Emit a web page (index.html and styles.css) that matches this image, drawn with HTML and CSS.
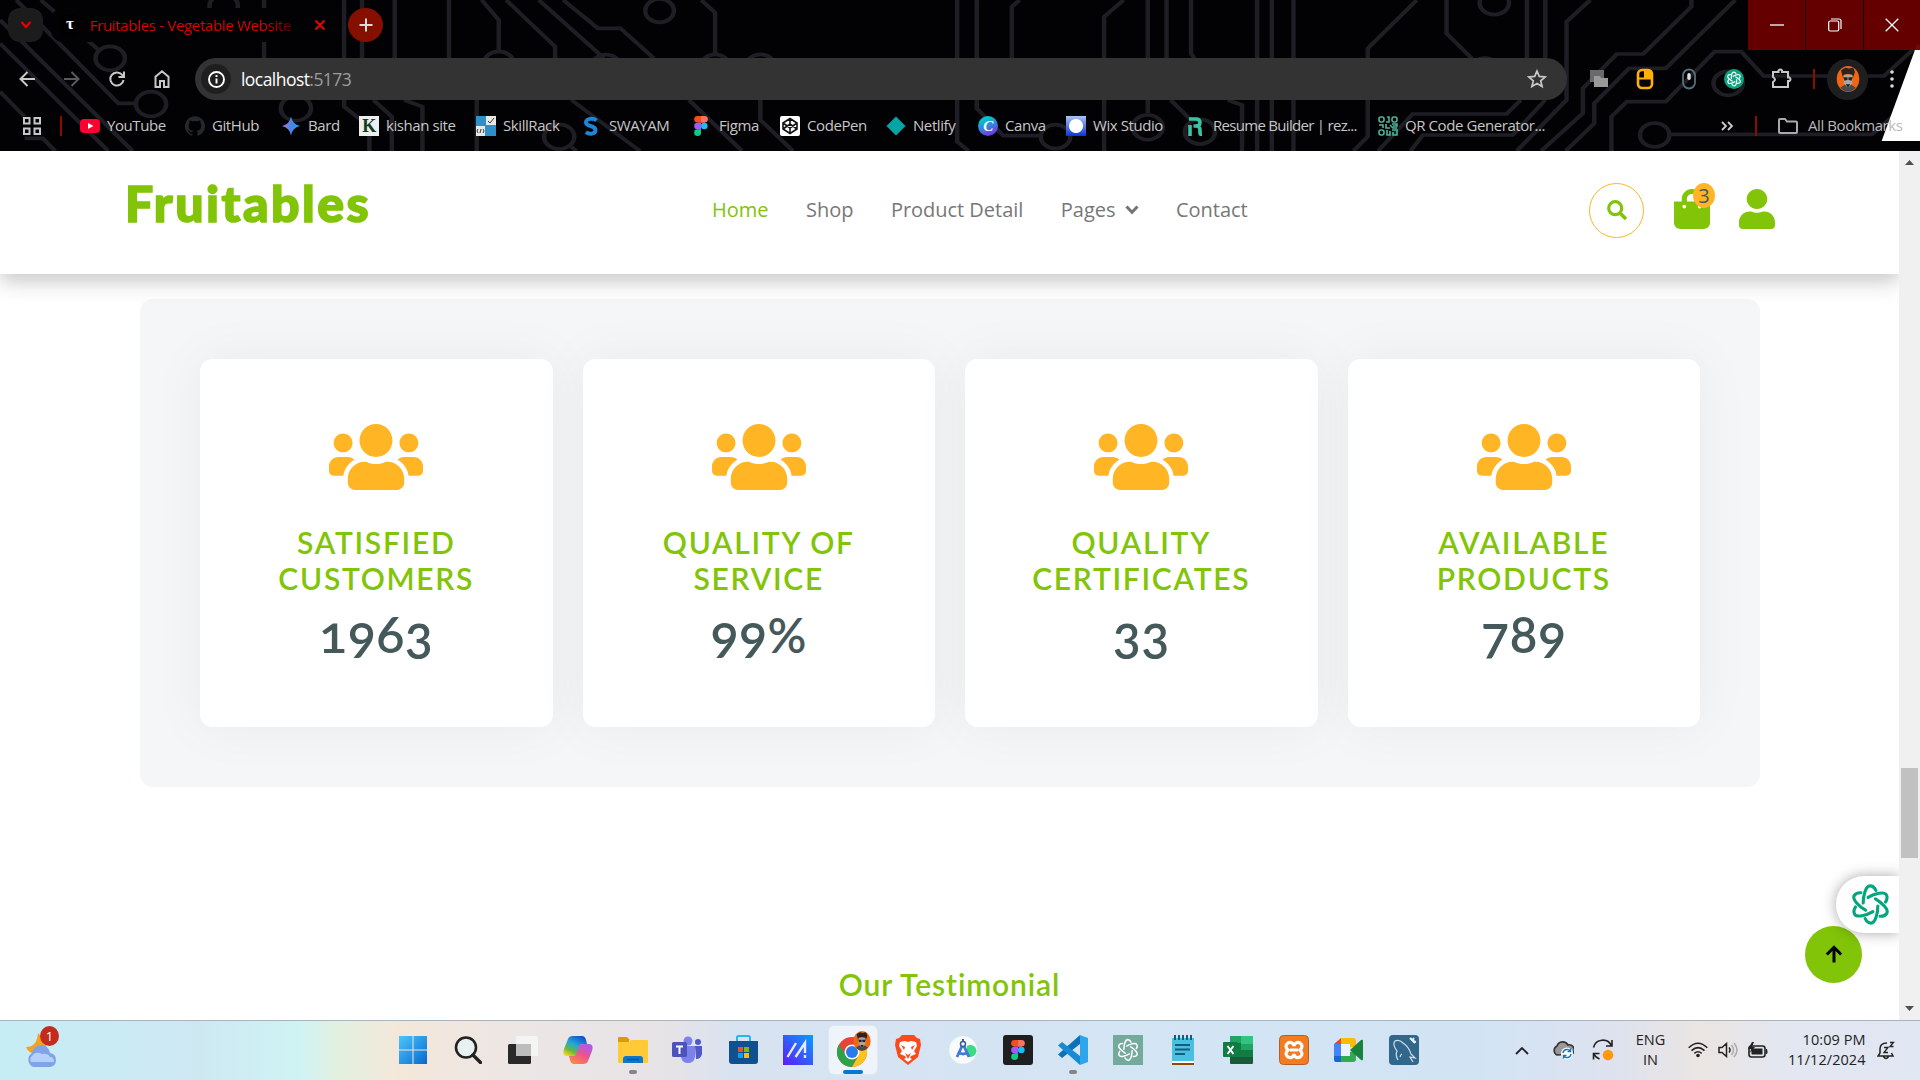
FILE: index.html
```html
<!DOCTYPE html>
<html lang="en">
<head>
<meta charset="utf-8">
<title>Fruitables - Vegetable Website Template</title>
<link rel="stylesheet" href="styles.css">
</head>
<body>
<svg class="defs" width="0" height="0" aria-hidden="true">
  <symbol id="users" viewBox="0 0 640 512"><path d="M96 224c35.300 0 64-28.700 64-64s-28.700-64-64-64-64 28.700-64 64 28.700 64 64 64zm448 0c35.300 0 64-28.700 64-64s-28.700-64-64-64-64 28.700-64 64 28.700 64 64 64zm32 32h-64c-17.600 0-33.500 7.100-45.100 18.600 40.300 22.100 68.900 62 75.100 109.400h66c17.700 0 32-14.300 32-32v-32c0-35.300-28.700-64-64-64zm-256 0c61.900 0 112-50.100 112-112S381.900 32 320 32 208 82.100 208 144s50.100 112 112 112zm76.800 32h-8.300c-20.800 10-43.900 16-68.500 16s-47.600-6-68.500-16h-8.300C179.600 288 128 339.600 128 403.200V432c0 26.500 21.500 48 48 48h288c26.500 0 48-21.500 48-48v-28.800c0-63.600-51.600-115.200-115.200-115.200zm-223.700-13.400C161.500 263.100 145.600 256 128 256H64c-35.300 0-64 28.700-64 64v32c0 17.700 14.300 32 32 32h65.900c6.300-47.400 34.900-87.300 75.200-109.400z"/></symbol>
  <symbol id="knot" viewBox="-22 -22 44 44"><g fill="none" stroke="currentColor" stroke-linecap="round"><path id="petal" d="M-7.500 -1.500C-7.500 -9 -5 -19 -.5 -19C2 -19 4 -17.500 5.500 -14.500"/><use href="#petal" transform="rotate(60)"/><use href="#petal" transform="rotate(120)"/><use href="#petal" transform="rotate(180)"/><use href="#petal" transform="rotate(240)"/><use href="#petal" transform="rotate(300)"/></g></symbol>
  <symbol id="figma" viewBox="0 0 14 20"><path fill="#f24e1e" d="M7 0v6.660H3.500a3.330 3.330 0 0 1 0-6.660z"/><path fill="#ff7262" d="M7 0h3.500a3.330 3.330 0 0 1 0 6.660H7z"/><path fill="#a259ff" d="M7 6.660v6.660H3.500a3.330 3.330 0 0 1 0-6.660z"/><circle fill="#1abcfe" cx="10.300" cy="10" r="3.330"/><path fill="#0acf83" d="M7 13.320v3.340a3.400 3.340 0 1 1-3.500-3.340z"/></symbol>
  <symbol id="face" viewBox="0 0 26 30"><ellipse cx="13" cy="15" rx="13" ry="15" fill="#f4650f"/><path d="M4 25l6-4h6l6 4q-9 9-18 0z" fill="#4a4a4a"/><path d="M8 10h10v10l-5 5-5-5z" fill="#a9a5a2"/><path d="M7 13l-2-8 5-3 4 1 5-1 2 5-2 6-1-3-5-1-5 1z" fill="#252525"/><path d="M7.500 13h5v3l-3.500 1zM13.500 13h5L17 17l-3.500-1zM10.500 21h5l-2.500 4z" fill="#222"/></symbol>
</svg>

<header class="browser">
  <svg class="circuit" viewBox="0 0 4704 453" preserveAspectRatio="none" aria-hidden="true">
    <g fill="none" stroke="#1f1e25" stroke-width="11">
      <path d="M40 0L290 310H332M100 0L242 150M0 60L325 453M0 130L265 453M0 275L60 350M60 415H105L135 453M647 0V175M843 0V320L905 380V453M887 0V175M967 0V175M1100 0V175M915 300L960 350V453M990 300L1035 320V453M1168 300V453M1180 0L1222 60V160M1240 0L1360 140V175M1320 0L1480 175M1380 0L1465 85H1520L1602 175M1400 300L1568 453M1400 440L1412 453"/>
      <circle cx="370" cy="312" r="37"/><circle cx="270" cy="175" r="36"/><circle cx="548" cy="18" r="35"/><circle cx="725" cy="325" r="37"/><circle cx="1222" cy="190" r="36"/><circle cx="1485" cy="200" r="36"/><circle cx="1370" cy="410" r="37"/>
      <g transform="translate(1568)"><path d="M150 0L184 38V160M120 300L250 453M295 300V360L375 453M777 0V425L805 453M825 0V325L890 407H983M930 0L911 20V175M1185 0L1137 50V453M1244 0V340M1290 0V175M1350 0V160L1358 175M1300 300L1350 360M1512 0V453M1548 0V453M1440 300L1475 315V453"/><circle cx="48" cy="32" r="35"/><circle cx="184" cy="198" r="35"/><circle cx="295" cy="198" r="35"/><circle cx="1018" cy="410" r="36"/><circle cx="1244" cy="382" r="37"/><circle cx="1372" cy="395" r="37"/></g>
      <g transform="translate(3136)"><path d="M33 0V453M335 0L215 145V410L180 453M408 0V100L470 175M605 0V175M650 0V175M760 0L702 65V300L580 453M1008 0V20L890 162H825L742 265V340L640 453M1115 0L945 205H855L770 310V370L700 453M812 453V350L850 305H945L1065 155H1130L1185 228H1480L1568 130M240 453L325 342H555L590 300M320 453L350 405H570L650 300M955 403H1450L1500 350"/><circle cx="525" cy="8" r="36"/><circle cx="502" cy="208" r="34"/><circle cx="1098" cy="250" r="36"/><circle cx="918" cy="405" r="36"/></g>
    </g>
    <path d="M4696 135H4704V423H4610z" fill="#fff"/>
  </svg>

  <div class="tabstrip">
    <div class="tab-search"><svg width="12" height="8" viewBox="0 0 12 8"><path d="M1.500 1L6 6 10.500 1" fill="none" stroke="#e80000" stroke-width="2.200"/></svg></div>
    <div class="tab">
      <span class="favicon">τ</span>
      <span class="tab-title">Fruitables - Vegetable Website</span>
      <svg width="12" height="12" viewBox="0 0 12 12"><path d="M1.500 1.500l9 9m0-9l-9 9" stroke="#e80000" stroke-width="2"/></svg>
    </div>
    <div class="new-tab"><svg width="14" height="14" viewBox="0 0 14 14"><path d="M7 .5v13M.5 7h13" stroke="#ddd" stroke-width="2"/></svg></div>
    <div class="window-buttons">
      <span><svg width="14" height="14" viewBox="0 0 14 14"><path d="M0 7h14" stroke="#fff" stroke-width="1.300"/></svg></span>
      <span><svg width="14" height="14" viewBox="0 0 14 14" fill="none" stroke="#fff" stroke-width="1.200"><rect x=".7" y="3" width="10" height="10" rx="1.500"/><path d="M3 1h8q2 0 2 2v8"/></svg></span>
      <span><svg width="14" height="14" viewBox="0 0 14 14"><path d="M.7.7l12.600 12.600m0-12.600L.7 13.300" stroke="#fff" stroke-width="1.300"/></svg></span>
    </div>
  </div>

  <div class="toolbar">
    <div class="nav-buttons">
      <svg width="16" height="16" viewBox="0 0 16 16"><path d="M16 8H2M8.500 1L1.500 8l7 7" fill="none" stroke="#c8c8c8" stroke-width="2"/></svg>
      <svg width="16" height="16" viewBox="0 0 16 16"><path d="M0 8h14M7.500 1l7 7-7 7" fill="none" stroke="#5a5a5a" stroke-width="2"/></svg>
      <svg width="16" height="16" viewBox="0 0 16 16"><path d="M14.500 9A6.600 6.600 0 1 1 13 3.700L14.800 5.500M15 .5v5.500H9.500" fill="none" stroke="#c8c8c8" stroke-width="2"/></svg>
      <svg width="16" height="18" viewBox="0 0 16 18"><path d="M1.500 17V6.700L8 1.300l6.500 5.400V17H10v-6H6v6z" fill="none" stroke="#c8c8c8" stroke-width="2"/></svg>
    </div>
    <div class="omnibox">
      <span class="site-info"><svg width="17" height="17" viewBox="0 0 17 17"><circle cx="8.500" cy="8.500" r="7.500" fill="none" stroke="#fff" stroke-width="1.900"/><path d="M8.500 7.500v5M8.500 4v2" stroke="#fff" stroke-width="1.900"/></svg></span>
      <span class="url">localhost<span class="port">:5173</span></span>
      <svg class="star" width="20" height="20" viewBox="0 0 20 20"><path d="M10 2l2.300 5.400 5.900.5-4.500 3.900 1.400 5.700-5.100-3-5.100 3 1.400-5.700L1.800 7.900l5.900-.5z" fill="none" stroke="#c8c8c8" stroke-width="1.700"/></svg>
    </div>
    <div class="extensions">
      <svg width="20" height="20" viewBox="0 0 20 20"><path d="M1 1h14v12H1z" fill="#6a6a6a"/><path d="M5 7h6l1 2h7v9H5z" fill="#999"/></svg>
      <svg width="18" height="22" viewBox="0 0 18 22"><rect x="2" y="2" width="14" height="18" rx="4" fill="#050505" stroke="#ffb000" stroke-width="2.600"/><path d="M16 10V5q0-3-3-3H9v8z" fill="#ffb000"/><path d="M2 10.500h14M9 3v7" stroke="#ffb000" stroke-width="2"/></svg>
      <svg width="16" height="22" viewBox="0 0 16 22"><rect x="2" y="1.500" width="12" height="19" rx="6" fill="none" stroke="#53707d" stroke-width="1.800"/><rect x="6.300" y="5" width="3.400" height="7" rx="1.700" fill="#e0e0e0"/></svg>
      <svg class="gpt-round" width="20" height="20" viewBox="0 0 20 20"><circle cx="10" cy="10" r="10" fill="#10a37f"/><use href="#knot" x="2" y="2" width="16" height="16" stroke-width="3.200"/></svg>
      <svg width="22" height="22" viewBox="0 0 22 22"><path d="M2 4h5.500V2.500q1.800-2 3.600 0V4H17v5.500h1.500q2 1.700 0 3.500H17v6H2v-5q4-2.300 0-5z" fill="none" stroke="#c8c8c8" stroke-width="2"/></svg>
    </div>
    <i class="divider"></i>
    <div class="avatar"><svg width="26" height="26"><use href="#face" width="26" height="26"/></svg></div>
    <svg class="kebab" width="4" height="18" viewBox="0 0 4 18" fill="#ddd"><circle cx="2" cy="2" r="1.800"/><circle cx="2" cy="9" r="1.800"/><circle cx="2" cy="16" r="1.800"/></svg>
  </div>

  <div class="bookmarks">
    <svg class="apps" width="20" height="20" viewBox="0 0 20 20" fill="none" stroke="#c8c8c8" stroke-width="2"><path d="M2 2h5.500v5.500H2zM12.500 2H18v5.500h-5.500zM2 12.500h5.500V18H2zM12.500 12.500H18V18h-5.500z"/></svg>
    <i class="divider"></i>
    <a class="bm w-105"><svg width="20" height="20" viewBox="0 0 20 20"><rect y="3" width="20" height="14" rx="4" fill="#ff0033"/><path d="M8 7l5.500 3L8 13z" fill="#fff"/></svg><span>YouTube</span></a>
    <a class="bm w-96"><svg width="20" height="20" viewBox="0 0 24 24"><path fill="#24292e" d="M12 .3a12 12 0 0 0-3.800 23.400c.6.100.8-.3.800-.6v-2c-3.300.700-4-1.600-4-1.600-.6-1.400-1.400-1.800-1.400-1.800-1-.7.100-.7.100-.7 1.200 0 1.900 1.200 1.900 1.200 1 1.800 2.800 1.300 3.500 1 0-.8.400-1.300.7-1.600-2.700-.3-5.500-1.300-5.500-6 0-1.200.5-2.300 1.300-3.100-.2-.4-.6-1.600 0-3.200 0 0 1-.3 3.400 1.200a11.500 11.500 0 0 1 6 0c2.300-1.500 3.300-1.200 3.300-1.200.6 1.600.2 2.800 0 3.200.9.800 1.300 1.900 1.300 3.200 0 4.600-2.800 5.600-5.500 5.900.5.400.9 1 .9 2.200v3.300c0 .3.100.7.800.6A12 12 0 0 0 12 .3"/></svg><span>GitHub</span></a>
    <a class="bm w-78"><svg width="20" height="20" viewBox="0 0 20 20"><defs><linearGradient id="bard"><stop stop-color="#b07ad0"/><stop offset=".5" stop-color="#4b84e8"/><stop offset="1" stop-color="#1b9be8"/></linearGradient></defs><path d="M10 .5Q11.500 8.500 19 10 11.500 11.500 10 19.500 8.500 11.500 1 10 8.500 8.500 10 .5z" fill="url(#bard)"/></svg><span>Bard</span></a>
    <a class="bm w-117"><b class="ico-k">K</b><span>kishan site</span></a>
    <a class="bm w-106"><svg width="20" height="20" viewBox="0 0 20 20"><path fill="#2f8fc8" d="M0 0h20v20H0z"/><path fill="#e8e8e8" d="M10 0h10v9H10zM0 10h9v10H0z"/><path d="M12 5l2 2 4-5M2 13l-1 2 1 2m5-4l1 2-1 2M5 13l-1 4" fill="none" stroke="#333"/></svg><span>SkillRack</span></a>
    <a class="bm w-110"><svg width="20" height="20" viewBox="0 0 20 20"><path d="M14.500 4.500C11 1.500 4 2.500 4 6.500c0 4.500 9.500 2.500 9.500 7.500 0 4-6 5-9.500 2" fill="none" stroke="#1d86d8" stroke-width="4"/></svg><span>SWAYAM</span></a>
    <a class="bm w-88"><svg width="20" height="20"><use href="#figma" x="2" width="14" height="20"/></svg><span>Figma</span></a>
    <a class="bm w-107"><svg width="20" height="20" viewBox="0 0 20 20"><rect width="20" height="20" rx="2" fill="#fff"/><path d="M10 2.500l7 4.500v6l-7 4.500L3 13V7zM10 2.500V8M10 12v5.500M3 7l7 5 7-5M3 13l7-5 7 5" fill="none" stroke="#111" stroke-width="1.600"/></svg><span>CodePen</span></a>
    <a class="bm w-92"><svg width="20" height="20" viewBox="0 0 20 20"><path d="M10 .5l9.500 9.500-9.500 9.500L.5 10z" fill="#05a5a5"/></svg><span>Netlify</span></a>
    <a class="bm w-88"><b class="ico-canva">C</b><span>Canva</span></a>
    <a class="bm w-120"><b class="ico-wix"></b><span>Wix Studio</span></a>
    <a class="bm w-192"><svg width="20" height="20" viewBox="0 0 20 20"><path d="M4 20V9M3 3h7q4 0 4 3.500T10 10H7.500M10 10q4 0 4 4v3q0 1.500 2 1.500" fill="none" stroke="#3cc3a5" stroke-width="3.600"/></svg><span class="long">Resume Builder | rez...</span></a>
    <a class="bm grow"><svg width="20" height="20" viewBox="0 0 20 20" fill="none" stroke="#4fb39a" stroke-width="1.600"><rect x="1" y="1" width="5" height="5" rx="2"/><rect x="14" y="1" width="5" height="5" rx="2"/><rect x="1" y="14" width="5" height="5" rx="2"/><path d="M9 1h2v5H8M8 8v4h4M1 9h4v3M14 8h5v2h-4M9 14v5h3v-4M14 14h5v5h-4v-3M12 9l3 3h4"/></svg><span>QR Code Generator...</span></a>
    <svg class="more" width="12" height="10" viewBox="0 0 12 10"><path d="M1 1l4 4-4 4M7 1l4 4-4 4" fill="none" stroke="#ccc" stroke-width="1.800"/></svg>
    <i class="divider last"></i>
    <a class="bm all"><svg width="22" height="20" viewBox="0 0 22 20"><path d="M2 4q0-1 1-1h5l2 2.500h9q1 0 1 1V16q0 1-1 1H3q-1 0-1-1z" fill="none" stroke="#aaa" stroke-width="2"/></svg><span>All Bookmarks</span></a>
  </div>
</header>

<div class="viewport">
  <div class="page">
    <nav class="navbar">
      <h1 class="logo">Fruitables</h1>
      <div class="links">
        <a class="current">Home</a><a>Shop</a><a>Product Detail</a>
        <a class="drop">Pages<svg width="14" height="10" viewBox="0 0 14 10"><path d="M1.500 1.500L7 7.300l5.500-5.800" fill="none" stroke="#747474" stroke-width="3"/></svg></a>
        <a>Contact</a>
      </div>
      <div class="actions">
        <button class="search"><svg width="20" height="20" viewBox="0 0 20 20"><circle cx="8.200" cy="8.200" r="6.500" fill="none" stroke="#81c408" stroke-width="3.200"/><path d="M13 13l6 6" stroke="#81c408" stroke-width="3.600"/></svg></button>
        <a class="bag"><svg width="36" height="40" viewBox="0 0 448 512" preserveAspectRatio="none" fill="#81c408"><path d="M352 160v-32C352 57.400 294.600 0 224 0S96 57.400 96 128v32H0v272c0 44.200 35.800 80 80 80h288c44.200 0 80-35.800 80-80V160h-96zm-192-32c0-35.300 28.700-64 64-64s64 28.700 64 64v32H160v-32zm160 120c-13.300 0-24-10.700-24-24s10.700-24 24-24 24 10.700 24 24-10.700 24-24 24zm-192 0c-13.300 0-24-10.700-24-24s10.700-24 24-24 24 10.700 24 24-10.700 24-24 24z"/></svg><span class="count">3</span></a>
        <svg width="36" height="40" viewBox="0 0 448 512" preserveAspectRatio="none" fill="#81c408"><path d="M224 256c70.700 0 128-57.300 128-128S294.700 0 224 0 96 57.300 96 128s57.300 128 128 128zm89.600 32h-16.700c-22.200 10.200-46.900 16-72.900 16s-50.600-5.800-72.900-16h-16.700C60.200 288 0 348.200 0 422.400V464c0 26.500 21.500 48 48 48h352c26.500 0 48-21.500 48-48v-41.600c0-74.200-60.200-134.400-134.400-134.400z"/></svg>
      </div>
    </nav>

    <section class="facts">
      <article class="card"><svg class="users"><use href="#users"/></svg><h4>satisfied<br>customers</h4><p>1963</p></article>
      <article class="card"><svg class="users"><use href="#users"/></svg><h4>quality of<br>service</h4><p>99<span class="percent">%</span></p></article>
      <article class="card"><svg class="users"><use href="#users"/></svg><h4>quality<br>certificates</h4><p>33</p></article>
      <article class="card"><svg class="users"><use href="#users"/></svg><h4>Available<br>Products</h4><p>789</p></article>
    </section>
    <h4 class="testimonial">Our Testimonial</h4>

    <div class="gpt-float"><svg width="43" height="43" stroke-width="3.200"><use href="#knot"/></svg></div>
    <div class="to-top"><svg width="18" height="18" viewBox="0 0 18 18"><path d="M9 17.500V3M1.800 9.500L9 2.300l7.200 7.200" fill="none" stroke="#000" stroke-width="3"/></svg></div>
  </div>
  <div class="scrollbar">
    <svg width="9" height="5" viewBox="0 0 9 5"><path d="M4.500 0L9 5H0z" fill="#505050"/></svg>
    <div class="thumb"></div>
    <svg width="9" height="5" viewBox="0 0 9 5"><path d="M0 0h9L4.500 5z" fill="#505050"/></svg>
  </div>
</div>

<footer class="taskbar">
  <div class="weather">
    <svg width="32" height="34" viewBox="0 0 32 34"><path d="M13 0q-1 14-12 14 3 8 13 7 9-3 7-12z" fill="#f6a21c"/><path d="M8 34a8 8 0 0 1-1-14q2-8 9-8 7 0 9 8 6 1 6 7t-6 7z" fill="#7fa4ea"/><path d="M6 29a5 5 0 0 1 1-6 7 7 0 0 1 10-2q6-1 8 3 4 0 4 5z" fill="#b5d0fb"/></svg>
    <span class="alert">1</span>
  </div>
  <div class="apps-row">
    <span><svg width="28" height="28" viewBox="0 0 28 28"><defs><linearGradient id="win" x2="1" y2="1"><stop stop-color="#4cc6fa"/><stop offset="1" stop-color="#0669cf"/></linearGradient></defs><path d="M0 0h13.500v13.500H0zM14.500 0H28v13.500H14.500zM0 14.500h13.500V28H0zM14.500 14.500H28V28H14.500z" fill="url(#win)"/></svg></span>
    <span><svg width="28" height="28" viewBox="0 0 28 28"><circle cx="12" cy="11.500" r="10" fill="#e8f0f1" stroke="#222" stroke-width="2.600"/><path d="M19 19l7.500 7.500" stroke="#222" stroke-width="3.400" stroke-linecap="round"/></svg></span>
    <span><svg width="30" height="28" viewBox="0 0 30 28"><rect y="8" width="23" height="20" rx="1.500" fill="#292929"/><rect x="8" width="22" height="20" rx="1.500" fill="#f4f4f4"/><path d="M8 8h15v12H8z" fill="#bdbdbd"/></svg></span>
    <span><svg width="30" height="28" viewBox="0 0 30 28"><defs><linearGradient id="cp1" x1=".8" x2=".2" y2="1"><stop stop-color="#1249c9"/><stop offset=".45" stop-color="#22a7d7"/><stop offset=".75" stop-color="#65b83c"/><stop offset="1" stop-color="#f5d51c"/></linearGradient><linearGradient id="cp2" x1=".8" x2=".2" y2="1"><stop stop-color="#a75cf2"/><stop offset=".5" stop-color="#ec548e"/><stop offset="1" stop-color="#fb8b3d"/></linearGradient></defs><path d="M10 0h9q3 0 4 4l1 4h-4q-3 0-4 4l-2 6q-1 2-4 2H4q-5 0-3-7L5 3q1-3 5-3z" fill="url(#cp1)"/><path d="M20 28h-9q-3 0-4-4l-1-4h4q3 0 4-4l2-6q1-2 4-2h6q5 0 3 7l-4 10q-1 3-5 3z" fill="url(#cp2)"/></svg></span>
    <span class="running"><svg width="30" height="28" viewBox="0 0 30 28"><path d="M0 2q0-1 1-1h8l3 3h-1v4H0z" fill="#dc9a05"/><path d="M0 6h11l2-2h16q1 0 1 1v21q0 1-1 1H1q-1 0-1-1z" fill="#ffca35"/><path d="M5 27v-4q0-3 3-3h14q3 0 3 3v4z" fill="#0b78cd"/><path d="M9 23.500h12" stroke="#07549a" stroke-width="1.500"/></svg></span>
    <span><svg width="32" height="28" viewBox="0 0 32 28"><circle cx="16" cy="5" r="4.500" fill="#7b83eb"/><circle cx="26" cy="6" r="3" fill="#5059c9"/><path d="M9 10h14v11q-1 6-7 6t-7-6z" fill="#7b83eb"/><path d="M23 10h7v8q-1 5-6 5z" fill="#5059c9"/><rect y="6" width="15" height="15" rx="1.500" fill="#4b53bc"/><path d="M4 10.500h7M7.500 10.500V18" stroke="#fff" stroke-width="2"/></svg></span>
    <span><svg width="29" height="30" viewBox="0 0 29 30"><path d="M8 7V2.500Q8 1 9.500 1h10q1.500 0 1.500 1.500V7" fill="none" stroke="#28b4ef" stroke-width="2"/><path d="M0 6h29v20q0 3-3 3H3q-3 0-3-3z" fill="#10508f"/><path fill="#f25022" d="M9 12h5v5H9z"/><path fill="#7fba00" d="M15 12h5v5h-5z"/><path fill="#00a4ef" d="M9 18h5v5H9z"/><path fill="#ffb900" d="M15 18h5v5h-5z"/></svg></span>
    <span><svg width="30" height="30" viewBox="0 0 30 30"><defs><linearGradient id="ma" x1="1" x2="0" y2="1"><stop stop-color="#079dff"/><stop offset="1" stop-color="#5f1cf5"/></linearGradient></defs><path fill="url(#ma)" d="M0 0h30v30H0z"/><path d="M4.500 22L13 8M12.500 22L22 8V18M22 20v3" fill="none" stroke="#e8eaff" stroke-width="2.400"/></svg></span>
    <span class="active"><svg width="38" height="38" viewBox="0 0 38 38"><circle cx="18" cy="21" r="15" fill="#e94335"/><path d="M5 13.500A15 15 0 0 0 18 36l6-11.500H12z" fill="#2ba24c"/><path d="M31 13.500A15 15 0 0 1 18 36l6.500-11.500-1-11z" fill="#fcc31e"/><circle cx="18" cy="21" r="7.500" fill="#fff"/><circle cx="18" cy="21" r="6" fill="#2a7be9"/><use href="#face" x="18" width="20" height="20"/></svg></span>
    <span><svg width="26" height="30" viewBox="0 0 26 30"><path d="M7 0h12l3 3 3 1 1 6-3 12-10 8-10-8L0 10l1-6 3-1z" fill="#fb4a1c"/><path d="M5 7l5-1 3 1 3-1 5 1 1 4-3 5 2 3-5 2-1 2 2 1-4 3-4-3 2-1-1-2-5-2 2-3-3-5z" fill="#fff"/><path d="M6 10l4 2-1 3zM20 10l-4 2 1 3zM10 18l3 2 3-2-3 6z" fill="#fb4a1c"/></svg></span>
    <span><svg width="30" height="30" viewBox="0 0 30 30"><circle cx="15" cy="15" r="14" fill="#f8fafb" stroke="#e1e8ed" stroke-dasharray="2 1.500"/><path d="M19 11a6 6 0 1 1-1 9z" fill="#3ddb85"/><path d="M15 9L9 22M15 9l6 13M10 17q5 4 10 0" fill="none" stroke="#3f79d9" stroke-width="2.800"/><circle cx="15" cy="9" r="2.500" fill="#fff" stroke="#315f9e" stroke-width="1.500"/><path d="M15 4v3" stroke="#315f9e" stroke-width="2"/></svg></span>
    <span><svg width="30" height="30"><rect width="30" height="30" rx="3" fill="#1f1f1f"/><use href="#figma" x="8" y="5" width="14" height="20"/></svg></span>
    <span class="running"><svg width="30" height="30" viewBox="0 0 30 30"><path d="M22 0v9L4 23l-4-3.500z" fill="#0b72b9"/><path d="M0 10.500L4 7l18 14v9z" fill="#168bd3"/><path d="M22 0l8 3v24l-8 3z" fill="#2fa5ec"/></svg></span>
    <span class="white"><svg width="30" height="30" viewBox="0 0 30 30"><path fill="#74aa9c" d="M0 0h30v30H0z"/><use href="#knot" x="3" y="3" width="24" height="24" stroke-width="2.800"/></svg></span>
    <span><svg width="24" height="30" viewBox="0 0 24 30"><path fill="#4bbfdf" d="M1 3h22v23H1z"/><path d="M1 26h22v3H1z" fill="#fff"/><path d="M1 29h22" stroke="#944807" stroke-width="2"/><path d="M4 0v5M8 0v5M12 0v5M16 0v5M20 0v5M4 10h15M4 14.500h15M4 19h10" stroke="#125e7f" stroke-width="2"/></svg></span>
    <span><svg width="30" height="28" viewBox="0 0 30 28"><path fill="#21a366" d="M7 0h22q1 0 1 1v13H7z"/><path fill="#33c481" d="M18 0h11q1 0 1 1v7H18z"/><path fill="#107c41" d="M7 7h11v14H7zM18 14h12v7H18z"/><path fill="#185c37" d="M7 21h23v6q0 1-1 1H8q-1 0-1-1z"/><rect y="6" width="15" height="15" rx="1" fill="#107c41"/><path d="M4.500 10l6 8m0-8l-6 8" stroke="#fff" stroke-width="2"/></svg></span>
    <span><svg width="30" height="30" viewBox="0 0 30 30"><rect x=".5" y=".5" width="29" height="29" rx="4" fill="#f47b20" stroke="#b35f27"/><path d="M9 8a4 4 0 0 1 6 3 4 4 0 0 1 6-3q4 3 0 7 4 4 0 7-5 2-6-3-1 5-6 3-4-3 0-7-4-4 0-7zM11 15h8" fill="none" stroke="#fff" stroke-width="3.200"/></svg></span>
    <span><svg width="29" height="24" viewBox="0 0 29 24"><path d="M0 6l7-6v6z" fill="#e94335"/><path d="M7 0h12q3 0 3 3v6h-6V6H7z" fill="#fbbc04"/><path d="M0 6h7v12H0z" fill="#4285f4"/><path d="M0 18h7v6H2q-2 0-2-2z" fill="#1967d2"/><path d="M7 18h9v-4l6-2v9q0 3-3 3H7z" fill="#34a853"/><path d="M16 12l11-10q2-1 2 1v18q0 2-2 1z" fill="#17833b"/><path d="M7 6h9v12H7z" fill="#eef3fb"/></svg></span>
    <span><svg width="30" height="30" viewBox="0 0 30 30"><rect width="30" height="30" rx="4" fill="#31678a"/><path d="M9 25Q6 20 8 16 3 9 6 6q4-2 8 2 6 4 8 11l4 4-5-1 3 5M11 22q1-3 2-3" fill="none" stroke="#cfe0eb" stroke-width="1.200"/><path d="M21 3l5 5M25 3q-3 3 2 4" stroke="#e8f1f6" stroke-width="2" fill="none"/></svg></span>
  </div>
  <div class="tray">
    <svg class="caret" width="14" height="9" viewBox="0 0 14 9"><path d="M1 8l6-6 6 6" fill="none" stroke="#222" stroke-width="1.800"/></svg>
    <svg class="cloud" width="22" height="20" viewBox="0 0 22 20"><path d="M5 15a5 5 0 0 1 0-9 6 6 0 0 1 11-1 5 5 0 0 1 4 9z" fill="#999" stroke="#333" stroke-width="1.600"/><circle cx="15" cy="13.500" r="6" fill="#fff"/><path d="M11 13a4 4 0 0 1 7.500-1.500m0-3v3h-3M19 14a4 4 0 0 1-7.500 1.500m0 3v-3h3" fill="none" stroke="#1473c8" stroke-width="1.400"/></svg>
    <svg class="sync" width="22" height="22" viewBox="0 0 22 22"><path d="M1.500 8.500A9.500 9.500 0 0 1 19.500 7M20 1v6h-6M7.500 20Q3 18 1.700 14.500M1.500 20.500v-6h6" fill="none" stroke="#222" stroke-width="1.600"/><circle cx="16" cy="16" r="5.300" fill="#ff9a0a"/></svg>
    <div class="lang">ENG<br>IN</div>
    <svg class="wifi" width="20" height="16" viewBox="0 0 20 16"><g fill="none" stroke="#222" stroke-width="1.500"><path d="M.7 5.800q9.300-9 18.600 0M3.500 8.600q6.500-6 13 0M6.300 11.400q3.700-3.200 7.400 0"/></g><circle cx="10" cy="13.500" r="1.800" fill="#222"/></svg>
    <svg class="sound" width="20" height="16" viewBox="0 0 20 16" fill="none" stroke="#222" stroke-width="1.500"><path d="M1 5.500h3L8.500 1.500v13L4 10.500H1zM11 5.500q2 2.500 0 5"/><path d="M13.500 3q4 5 0 10M16 1q6 7 0 14" stroke="#aaa"/></svg>
    <svg class="battery" width="20" height="16" viewBox="0 0 20 16"><rect x="1" y="4" width="16" height="11" rx="2.500" fill="none" stroke="#222" stroke-width="1.600"/><path d="M3.500 6.500h11v6h-11zM18 7h1q1 2.500 0 5h-1z" fill="#222"/><path d="M4 0L0 7h3L2 11l5-6H4l2-5z" fill="#222"/></svg>
    <div class="clock">10:09 PM<br>11/12/2024</div>
    <svg class="bell" width="18" height="19" viewBox="0 0 18 19" fill="none" stroke="#222" stroke-width="1.500"><path d="M10 2Q3 2 3 8v4l-2 3h15l-1.500-3M6.500 15.500q2.500 4 5 0"/><path d="M7 6.500h4l-4 5h4M13 1.500h3.500L13 5.500h3.500" stroke-width="1.300"/></svg>
  </div>
</footer>
</body>
</html>
```

FILE: styles.css
```css
* { box-sizing: border-box; }
body { margin: 0; width: 1920px; height: 1080px; overflow: hidden; display: flex; flex-direction: column; background: #fff; font-family: "Open Sans", "Noto Sans", sans-serif; }
svg { display: block; flex: none; }
.defs { position: absolute; }
h1, h4, p { margin: 0; }
b { flex: none; }

/* browser chrome */
.browser { position: relative; height: 151px; background: #020104; color: #ccc; flex: none; }
.circuit { position: absolute; inset: 0; width: 1920px; height: 151px; }
.tabstrip, .toolbar, .bookmarks { position: relative; display: flex; align-items: center; }
.tabstrip { height: 50px; padding-left: 8px; }
.tab-search { width: 35px; height: 34px; border-radius: 12px; background: #1c1c1c; display: grid; place-items: center; }
.tab { width: 288px; height: 34px; margin-left: 8px; padding: 0 5px 0 8px; border-radius: 12px; background: #020104; display: flex; align-items: center; }
.favicon { width: 22px; height: 22px; border-radius: 50%; background: #000; color: #fff; font: bold 17px/20px "Liberation Serif", serif; text-align: center; }
.tab-title { width: 212px; margin-left: 9px; white-space: nowrap; font-size: 15px; letter-spacing: -.32px; color: #e00000; -webkit-mask-image: linear-gradient(90deg, #000 82%, rgba(0, 0, 0, .35) 96%); }
.tab svg { margin-left: 12px; }
.new-tab { width: 35px; height: 34px; margin-left: 9px; border-radius: 50%; background: #861000; display: grid; place-items: center; }
.window-buttons { margin-left: auto; display: flex; gap: 1px; height: 50px; }
.window-buttons span { width: 57px; background: rgba(105, 0, 0, .96); display: grid; place-items: center; }
.window-buttons span:last-child { width: 56px; }
.toolbar { height: 58px; padding-left: 19px; }
.nav-buttons { display: flex; align-items: center; gap: 29px; width: 176px; }
.omnibox { width: 1372px; height: 42px; border-radius: 21px; background: #333; display: flex; align-items: center; padding: 0 20px 0 6px; }
.site-info { width: 30px; height: 30px; border-radius: 50%; background: #1f1f1f; display: grid; place-items: center; }
.url { margin-left: 10px; font-size: 17.500px; letter-spacing: -.55px; color: #fff; }
.port { color: #9c9c9c; }
.star { margin-left: auto; }
.extensions { display: flex; align-items: center; gap: 27px; margin-left: 22px; }
.gpt-round, .white { color: #fff; }
.divider { width: 2px; height: 20px; background: #8b0c00; flex: none; }
.toolbar .divider { margin: 0 12px 0 20px; }
.avatar { width: 41px; height: 41px; border-radius: 50%; background: #1f1f1f; display: grid; place-items: center; }
.kebab { margin-left: 22px; }
.bookmarks { height: 36px; padding-left: 22px; }
.bookmarks > .divider { margin: 0 18px; }
.bookmarks > .last { margin: 0 17px 0 22px; }
.bm { display: flex; align-items: center; gap: 7px; white-space: nowrap; font-size: 15px; line-height: 20px; letter-spacing: -.42px; flex: none; color: #c7c7c7; }
.bm span { padding-bottom: 2px; }
.bm .long { letter-spacing: -.7px; }
.w-78 { width: 78px; }
.w-88 { width: 88px; }
.w-92 { width: 92px; }
.w-96 { width: 96px; }
.w-105 { width: 105px; }
.w-106 { width: 106px; }
.w-107 { width: 106px; }
.w-110 { width: 110px; }
.w-117 { width: 117px; }
.w-120 { width: 120px; }
.w-192 { width: 192px; }
.grow { width: 343px; }
.ico-k { width: 20px; height: 20px; background: #eee; color: #123c1c; font: bold 18px/20px "Liberation Serif", serif; text-align: center; }
.ico-canva { width: 20px; height: 20px; border-radius: 50%; background: linear-gradient(160deg, #00c4cc 20%, #3c7be0 55%, #7d2ae8 90%); color: #fff; font: italic bold 15px/20px "Liberation Serif", serif; text-align: center; }
.ico-wix { width: 20px; height: 20px; background: radial-gradient(circle, #fff 6.500px, transparent 7.500px), linear-gradient(#a9c3f5, #0a35d8); }
.bookmarks > .all { color: #b9b9b9; margin-left: 3px; gap: 9px; }

/* page */
.viewport { display: flex; height: 869px; flex: none; }
.page { position: relative; width: 1899px; overflow: hidden; }
.navbar { position: relative; height: 123px; padding: 0 124px 0 125px; display: flex; background: #fff; box-shadow: 0 10px 20px rgba(0, 0, 0, .15), 0 6px 12px rgba(0, 0, 0, .06); }
.logo { width: 587px; padding-top: 22px; font: 900 50px/60px "Lato Black", Lato, sans-serif; letter-spacing: 2.500px; -webkit-text-stroke: 1.600px #81c408; color: #81c408; }
.links { display: flex; align-items: flex-start; gap: 37.500px; padding-top: 45px; font-size: 20px; line-height: 27px; letter-spacing: -.02px; white-space: nowrap; }
.links a { color: #777; }
.links .current { color: #81c408; }
.drop { display: flex; align-items: center; gap: 9px; }
.actions { margin-left: auto; display: flex; align-items: flex-start; padding-top: 38px; }
.search { width: 55px; height: 55px; border: 1px solid #ffb524; border-radius: 50%; background: #fff; display: grid; place-items: center; margin-top: -6px; padding: 0 0 2px; }
.bag { position: relative; margin: 0 29px 0 30px; }
.count { position: absolute; left: 19px; top: -6px; width: 22px; height: 25px; border-radius: 50%; background: #ffb524; color: #45595b; font-size: 20px; line-height: 25px; text-align: center; }
.facts { width: 1620px; height: 488px; margin: 25px 0 0 140px; padding: 60px; border-radius: 12.500px; background: #f4f6f8; display: grid; grid-template-columns: repeat(4, 1fr); gap: 30px; }
.card { border-radius: 12.500px; background: #fff; box-shadow: 0 0 56px rgba(0, 0, 0, .05); padding-top: 60px; text-align: center; }
.users { width: 94px; height: 76px; margin: 0 auto; fill: #ffb524; }
.card h4 { margin-top: 29px; font: 600 30px/36px "Lato Semibold", Lato, sans-serif; text-transform: uppercase; letter-spacing: 1.700px; color: #81c408; }
.card p { margin-top: 7px; font: 600 52px/60px "Lato Semibold", Lato, sans-serif; font-feature-settings: "onum"; letter-spacing: .5px; color: #45595b; }
.percent { font-size: 48px; }
.testimonial { margin-top: 179px; font: 600 30px/36px "Lato Semibold", Lato, sans-serif; letter-spacing: .9px; color: #81c408; text-align: center; }
.gpt-float { position: absolute; right: 0; top: 725px; width: 63px; height: 57px; border-radius: 28px 0 0 28px; background: #fff; box-shadow: 0 0 14px rgba(0, 0, 0, .35); color: #00a67d; display: grid; place-items: center; z-index: 2; padding-left: 5px; }
.to-top { position: absolute; left: 1805px; top: 775px; width: 57px; height: 57px; border-radius: 50%; background: #81c408; display: grid; place-items: center; padding-bottom: 2px; }
.scrollbar { width: 21px; background: #f0f0f0; display: flex; flex-direction: column; align-items: center; padding: 9px 0 9px; }
.thumb { width: 17px; height: 90px; margin: 603px 0 auto; background: #c1c1c1; }

/* taskbar */
.taskbar { height: 60px; flex: none; border-top: 1px solid #a9b4bd; display: flex; align-items: center; background: linear-gradient(90deg, #c6edf4 0, #cee8f2 200px, #cff3f4 300px, #e3f0df 340px, #f4e7da 400px, #ece6e5 520px, #e6e3e7 670px, #d7e3f1 740px, #d3e5f4 1200px, #d2e4f4 1480px, #dde2ef 1610px, #ebe5e3 1700px, #e2e7f1 1790px, #e1e7f3 1920px); }
.weather { position: relative; width: 360px; padding: 0 0 2px 25px; }
.alert { position: absolute; left: 40px; top: -7px; width: 19px; height: 20px; border-radius: 50%; background: #c42b1c; color: #fff; font-size: 13px; line-height: 20px; text-align: center; }
.apps-row { display: flex; margin-left: 25px; gap: 7.040px; width: 1129.500px; flex: none; padding: 0 0 1px 4px; }
.apps-row > span { position: relative; width: 48px; height: 48px; display: grid; place-items: center; flex: none; border-radius: 5px; }
.apps-row .active { background: #eff4fa; box-shadow: 0 0 0 1px #dfe7f0; }
.apps-row .running::after, .apps-row .active::after { content: ""; position: absolute; bottom: 0; left: 20px; width: 8px; height: 4px; border-radius: 2px; background: #858585; }
.apps-row .active::after { left: 14px; width: 20px; background: #0078d4; }
.tray { display: flex; align-items: center; color: #222; font-size: 14.500px; line-height: 20px; letter-spacing: .05px; white-space: nowrap; padding-bottom: 1px; }
.cloud { margin-left: 23px; }
.sync { margin-left: 18px; }
.lang { width: 30px; margin: 0 22px; text-align: center; }
.sound, .battery { margin-left: 10px; }
.clock { width: 98px; text-align: right; }
.bell { margin-left: 11px; }
```
